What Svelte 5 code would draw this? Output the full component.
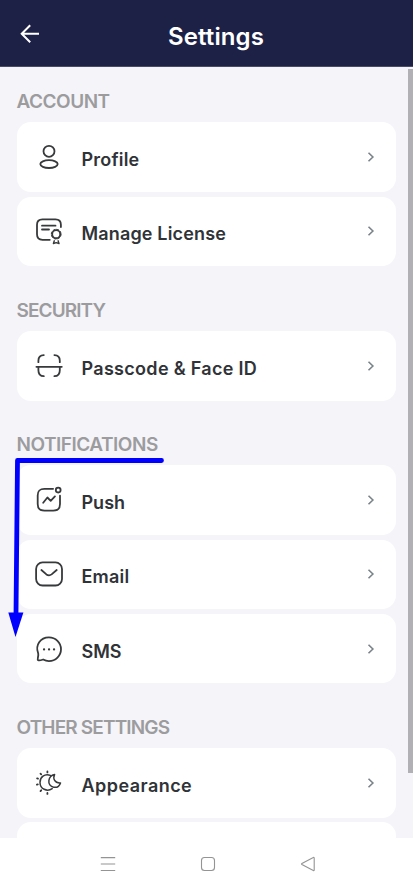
<script lang="ts">
	type Item = { label: string; icon: string; tracking?: number };
	type Section = { title: string; tracking?: number; items: Item[] };

	const sections: Section[] = [
		{
			title: "ACCOUNT",
			items: [
				{ label: "Profile", icon: "user" },
				{ label: "Manage License", icon: "license", tracking: 0.16 },
			],
		},
		{
			title: "SECURITY",
			tracking: -0.9,
			items: [{ label: "Passcode & Face ID", icon: "scan", tracking: 0.31 }],
		},
		{
			title: "NOTIFICATIONS",
			tracking: -0.48,
			items: [
				{ label: "Push", icon: "push", tracking: 0 },
				{ label: "Email", icon: "email" },
				{ label: "SMS", icon: "sms", tracking: 0 },
			],
		},
		{
			title: "OTHER SETTINGS",
			tracking: -0.85,
			items: [
				{ label: "Appearance", icon: "appearance", tracking: 0.45 },
				{ label: "", icon: "" },
			],
		},
	];
</script>

<div class="screen">
	<header>
		<button type="button" class="back" aria-label="Back">
			<svg width="20" height="20" viewBox="0 0 20 20">
				<path d="M10.2 1.2 1.7 9.7l8.5 8.5M2 9.7h17" />
			</svg>
		</button>
		<h1>Settings</h1>
	</header>

	<main>
		{#each sections as section}
			<section>
				<h2><span style:letter-spacing="{section.tracking ?? -0.5}px">{section.title}</span></h2>
				{#each section.items as item}
					<div class="card">
						{#if item.label}
							<svg class="icon" width="32" height="32" viewBox="0 0 32 32">
								{#if item.icon === "user"}
									<circle cx="16" cy="10.3" r="5.5" />
									<ellipse cx="16" cy="23.1" rx="8.7" ry="3.9" />
								{:else if item.icon === "license"}
									<path d="M16.8 24.8H9.5C5.8 24.8 4 23 4 19.3v-9.5c0-3.7 1.8-5.4 5.5-5.4h13c3.7 0 5.4 1.7 5.4 5.4v2.3M9 10.7h13.5M9 14.5h7" />
									<circle cx="23.2" cy="19.2" r="4" />
									<circle class="scallop" cx="23.2" cy="19.2" r="4.9" />
									<path class="ribbon" d="M21.3 25.8l-.9 2.7 2.8-.9 2.8.9-.9-2.7" />
								{:else if item.icon === "scan"}
									<path d="M3.4 16.8h25.4M5.4 12.2v-1.5c0-3.6 1.3-5.6 5.4-5.6M21.4 5.1c4.1 0 5.4 2 5.4 5.6v1.5M5.4 17v3.2c0 4.2 1.5 6 5.4 6M26.8 17v3.2c0 4.2-1.5 6-5.4 6" />
								{:else if item.icon === "push"}
									<path d="M20.1 4.8h-8.6c-5 0-6.8 1.8-6.8 6.7v8.4c0 4.9 1.9 6.8 6.8 6.8h8.7c4.9 0 6.8-1.9 6.8-6.8v-8.2M10.2 18.7l4.2-5.2 3.3 3.4 4.2-4.5" />
									<circle cx="25.2" cy="6.1" r="2.4" />
								{:else if item.icon === "email"}
									<rect x="3.1" y="4.4" width="25.9" height="23.1" rx="6.5" />
									<path d="m8.4 12 5 4.4c2 1.4 3.3 1.4 5.2 0l5.1-4.4" />
								{:else if item.icon === "sms"}
									<path d="M5.2 20.4C1.9 12 7.5 4.5 15.9 4.4c6.7 0 12.1 5.4 12.1 11.9s-5.4 11.8-12.1 11.8c-2.2 0-3.8-.5-5.8-1.6-1.8.6-3.3 1.3-5 .7-1.3-.8.8-3.8.1-6.8Z" />
									<path class="dots" d="M11 16.4h.1M16 16.4h.1M21 16.4h.1" />
								{:else if item.icon === "appearance"}
									<g class="thin">
										<path d="M17.4 8.4C11.6 6.2 6.9 10.2 7 15.4c.1 6.4 7 9.9 12.2 6.2" />
										<path d="M21.6 7.4c-2 4.3.1 8.9 5.9 8.5-1.1 3.2-4 4.8-6.8 4.3-3.4-.5-5.3-3.5-4.8-6.8.5-3.4 2.7-5.4 5.7-6Z" />
										<path class="rays" d="M14.4 5.4v-.9M8.2 7.4l-.7-.7M5 11.7l-.9-.3M4.8 17.4l-.9.3M8.2 23.3l-.7.8M14.4 26v.9" />
									</g>
								{/if}
							</svg>
							<span class="label" style:letter-spacing="{item.tracking ?? 0.2}px">{item.label}</span>
							<svg class="chevron" width="8" height="12" viewBox="0 0 8 12">
								<path d="m1.5 1.7 4.4 4.3-4.4 4.3" />
							</svg>
						{/if}
					</div>
				{/each}
			</section>
		{/each}
	</main>

	<nav>
		<svg width="16" height="16" viewBox="0 0 16 16">
			<path d="M.8 1.6h14.4M.8 8h14.4M.8 14.5h14.4" />
		</svg>
		<svg width="16" height="16" viewBox="0 0 16 16">
			<rect x="1.5" y="1.5" width="13" height="13" rx="3" />
		</svg>
		<svg width="16" height="16" viewBox="0 0 16 16">
			<path d="M14.2 2v12q0 .9-.9.4L1.9 8.5q-.8-.5 0-1L13.3 1.6q.9-.5.9.4Z" />
		</svg>
	</nav>

	<div class="scrollbar"></div>

	<svg class="arrow" width="413" height="879" viewBox="0 0 413 879">
		<path class="line" d="M161.5 460.5H17.5L16 614" />
		<path class="head" d="M8.3 612.6h15.1L15.5 637Z" />
	</svg>
</div>

<style>
:global(body) {
	margin: 0;
	overflow: hidden;
}
.screen {
	position: relative;
	width: 413px;
	height: 879px;
	overflow: hidden;
	display: flex;
	flex-direction: column;
	background: #f5f4f9;
	font-family: Inter, "Liberation Sans", sans-serif;
}
header {
	flex: none;
	box-sizing: border-box;
	height: 67px;
	display: grid;
	grid-template-columns: 60px 1fr 60px;
	align-items: start;
	background: #1d2146;
	border-bottom: 1px solid #494c69;
	color: #fff;
}
.back {
	padding: 24px 0 0 20px;
	border: none;
	background: none;
	line-height: 0;
}
.back svg {
	display: block;
	fill: none;
	stroke: #fff;
	stroke-width: 2;
}
h1 {
	margin: 0;
	padding: 22px 0 0 19px;
	font-size: 24px;
	line-height: 30px;
	font-weight: 600;
	letter-spacing: 0.1px;
	text-align: center;
}
main {
	flex: 1;
	min-height: 0;
	overflow: hidden;
	padding: 18.2px 17px 0;
}
section {
	margin-bottom: 27.5px;
}
h2 {
	margin: 0 0 0 -0.5px;
	height: 37.2px;
	line-height: 33px;
	font-size: 19px;
	font-weight: 600;
	color: #9c9c9f;
	white-space: nowrap;
}
.card {
	box-sizing: border-box;
	height: 69.6px;
	margin-bottom: 4.7px;
	padding: 0 21px 0 16px;
	border-radius: 14px;
	background: #fff;
	display: flex;
	align-items: center;
}
.icon {
	flex: none;
	margin-right: 16.5px;
	fill: none;
	stroke: #37393b;
	stroke-width: 1.8;
	stroke-linecap: round;
	stroke-linejoin: round;
}
.icon .scallop {
	stroke-width: 1;
	stroke-dasharray: 2 1.85;
}
.icon .ribbon {
	stroke-width: 1.4;
}
.icon .dots {
	stroke-width: 2.2;
}
.icon .thin {
	stroke-width: 1.5;
}
.icon .rays {
	stroke-width: 1.8;
}
.label {
	flex: 1;
	padding-top: 6px;
	font-size: 18px;
	line-height: 24px;
	font-weight: 600;
	color: #303337;
	white-space: nowrap;
}
.chevron {
	flex: none;
	fill: none;
	stroke: #7b838a;
	stroke-width: 1.6;
}
nav {
	flex: none;
	box-sizing: border-box;
	height: 41px;
	display: flex;
	justify-content: center;
	align-items: center;
	gap: 84px;
	padding: 10px 0 0 3px;
	background: #fff;
}
nav svg {
	fill: none;
	stroke: #949494;
	stroke-width: 1.1;
}
.scrollbar {
	position: absolute;
	top: 69px;
	right: 0;
	width: 5px;
	height: 704px;
	background: #b1b1b5;
}
.arrow {
	position: absolute;
	inset: 0;
	pointer-events: none;
}
.arrow .line {
	fill: none;
	stroke: #00f;
	stroke-width: 4.8;
	stroke-linecap: round;
	stroke-linejoin: round;
}
.arrow .head {
	fill: #00f;
}
</style>
